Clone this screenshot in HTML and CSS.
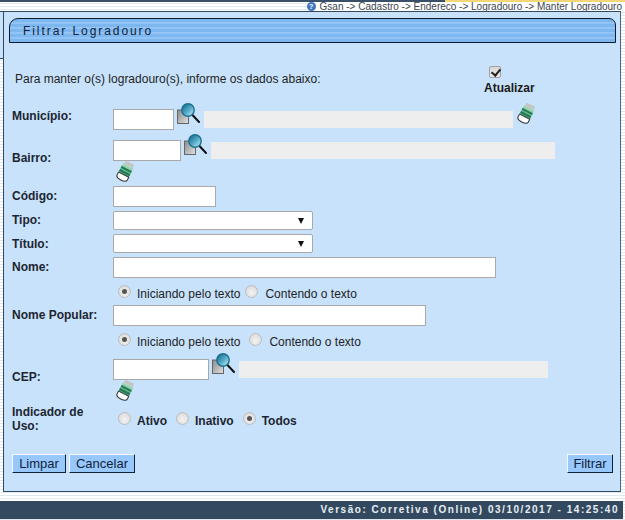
FILE: index.html
```html
<!DOCTYPE html>
<html lang="pt">
<head>
<meta charset="utf-8">
<title>Filtrar Logradouro</title>
<link rel="stylesheet" href="styles.css">
</head>
<body>
<svg class="defs" width="0" height="0" aria-hidden="true">
  <defs>
    <linearGradient id="doc" x1="0" y1="0" x2="1" y2="1"><stop offset="0" stop-color="#8a8a8a"/><stop offset="1" stop-color="#e2e2e2"/></linearGradient>
    <linearGradient id="gl" x1="0" y1="0" x2="1" y2="1"><stop offset="0" stop-color="#0f5f80"/><stop offset=".55" stop-color="#59aecb"/><stop offset="1" stop-color="#d8f2fb"/></linearGradient>
    <linearGradient id="gr" x1="0" y1="0" x2="0" y2="1"><stop offset="0" stop-color="#a7dcc0"/><stop offset="1" stop-color="#3f9a6c"/></linearGradient>
    <symbol id="lupa" viewBox="0 0 23 21">
      <rect x="0.5" y="7" width="11" height="13.5" fill="url(#doc)" stroke="#666" stroke-width="1"/>
      <path d="M15.5 12 L22 19" stroke="#111" stroke-width="2" stroke-linecap="round"/>
      <circle cx="11" cy="7" r="6.2" fill="url(#gl)" stroke="#17708f" stroke-width="1.4"/>
    </symbol>
    <symbol id="borracha" viewBox="0 0 20 21">
      <g transform="rotate(27 10 10.5)">
        <path d="M5.5 4 L6 0.5 H15 L15.5 4 Z" fill="#c4c4c4"/>
        <rect x="4.5" y="4" width="11.5" height="10" fill="url(#gr)"/>
        <rect x="4.5" y="7.2" width="11.5" height="1.8" fill="#1f7a50"/>
        <rect x="4.5" y="10.6" width="11.5" height="1.8" fill="#1f7a50"/>
        <path d="M4.5 14 H16 V17 Q16 20 10 20 Q4.5 20 4.5 17 Z" fill="#fff" stroke="#333" stroke-width="1"/>
      </g>
    </symbol>
  </defs>
</svg>

<div class="page">
  <header class="topbar">
    <span class="crumbs"><span class="help">?</span>Gsan -&gt; Cadastro -&gt; Endereco -&gt; Logradouro -&gt; Manter Logradouro</span>
  </header>

  <div class="middle">
    <div class="stub"></div>
    <main class="panel">
      <h1 class="title">Filtrar Logradouro</h1>

      <div class="intro">
        <p class="intro-text">Para manter o(s) logradouro(s), informe os dados abaixo:</p>
        <label class="update"><input type="checkbox" class="check" checked><span>Atualizar</span></label>
      </div>

      <div class="row row-mun">
        <label class="lbl">Município:</label>
        <div class="fields">
          <input class="txt w61" type="text">
          <svg class="ico-lupa"><use href="#lupa"/></svg>
          <span class="ro w309"></span>
          <svg class="ico-bor"><use href="#borracha"/></svg>
        </div>
      </div>

      <div class="row row-bai">
        <label class="lbl">Bairro:</label>
        <div class="fields">
          <input class="txt w68" type="text">
          <svg class="ico-lupa"><use href="#lupa"/></svg>
          <span class="ro w344"></span>
          <svg class="ico-bor line2"><use href="#borracha"/></svg>
        </div>
      </div>

      <div class="row row-cod">
        <label class="lbl">Código:</label>
        <div class="fields"><input class="txt w103" type="text"></div>
      </div>

      <div class="row row-sel">
        <label class="lbl lbl-tipo">Tipo:</label>
        <div class="fields"><span class="sel"></span></div>
      </div>

      <div class="row row-sel">
        <label class="lbl">Título:</label>
        <div class="fields"><span class="sel"></span></div>
      </div>

      <div class="row row-nome">
        <label class="lbl">Nome:</label>
        <div class="fields"><input class="txt w383" type="text"></div>
      </div>

      <div class="opts opts-a">
        <input type="radio" class="radio" name="a" checked><span class="opt gap-a">Iniciando pelo texto</span>
        <input type="radio" class="radio" name="a"><span class="opt">Contendo o texto</span>
      </div>

      <div class="row row-pop">
        <label class="lbl">Nome Popular:</label>
        <div class="fields"><input class="txt w313" type="text"></div>
      </div>

      <div class="opts opts-b">
        <input type="radio" class="radio" name="b" checked><span class="opt gap-b">Iniciando pelo texto</span>
        <input type="radio" class="radio" name="b"><span class="opt">Contendo o texto</span>
      </div>

      <div class="row row-cep">
        <label class="lbl lbl-cep">CEP:</label>
        <div class="fields">
          <input class="txt w96" type="text">
          <svg class="ico-lupa"><use href="#lupa"/></svg>
          <span class="ro w309"></span>
          <svg class="ico-bor line2"><use href="#borracha"/></svg>
        </div>
      </div>

      <div class="row row-ind">
        <label class="lbl">Indicador de Uso:</label>
        <div class="uso">
          <input type="radio" class="radio" name="c"><b class="opt-b">Ativo</b>
          <input type="radio" class="radio" name="c"><b class="opt-b">Inativo</b>
          <input type="radio" class="radio" name="c" checked><b class="opt-b">Todos</b>
        </div>
      </div>

      <div class="actions">
        <div class="left">
          <button class="btn b-limpar" type="button">Limpar</button>
          <button class="btn b-cancel" type="button">Cancelar</button>
        </div>
        <button class="btn b-filtrar" type="button">Filtrar</button>
      </div>
    </main>
  </div>

  <footer class="footer">Versão: Corretiva (Online) 03/10/2017 - 14:25:40</footer>
</div>
</body>
</html>
```

FILE: styles.css
```css
* { box-sizing: border-box; }
html, body { margin: 0; padding: 0; }
body {
  width: 625px;
  height: 520px;
  overflow: hidden;
  font-family: "Liberation Sans", Arial, sans-serif;
  color: #111;
  background: repeating-linear-gradient(to bottom, #dfe9f1 0, #dfe9f1 1px, #fff 1px, #fff 3px);
}
.defs { position: absolute; }
.page { width: 625px; height: 520px; display: flex; flex-direction: column; }

.topbar {
  height: 11px;
  padding-top: 1px;
  display: flex;
  justify-content: flex-end;
  background: linear-gradient(to right, #3a5068 445px, #f3d675 445px) no-repeat 0 0 / 100% 2px;
}
.crumbs {
  display: flex;
  align-items: center;
  height: 10px;
  padding-right: 3px;
  font-size: 10px;
  color: #3c4650;
  background: linear-gradient(to bottom, transparent 1px, #fff 1px);
  white-space: nowrap;
}
.help {
  width: 9px; height: 9px;
  margin-right: 4px;
  border-radius: 50%;
  background: #3f78c0;
  color: #fff;
  font-size: 7px;
  font-weight: bold;
  text-align: center;
  line-height: 9px;
}

.middle { display: flex; align-items: flex-start; }
.stub {
  width: 3px;
  height: 48px;
  flex: none;
  background: #c8e2fc;
  border-top: 1px solid #33495f;
  border-bottom: 1px solid #33495f;
}
.panel {
  width: 618px;
  height: 481px;
  padding: 6px 4px 0 5px;
  background: #c8e2fc;
  border: 1px solid #33495f;
  border-right-color: #4f6478;
}
.title {
  margin: 0;
  height: 25px;
  padding: 5px 0 0 13px;
  font-size: 12px;
  line-height: 14px;
  font-weight: normal;
  letter-spacing: 1.93px;
  color: #10233a;
  border: 1px solid #0b1a2c;
  border-radius: 9px 7px 0 0;
  background: repeating-linear-gradient(to bottom, #7db7f0 0, #7db7f0 3px, #93c4f5 3px, #93c4f5 5px);
}

.intro { position: relative; height: 66px; }
.intro-text {
  margin: 0;
  padding: 29px 0 0 6px;
  font-size: 12px;
  line-height: 14px;
  color: #222;
}
.update {
  position: absolute;
  left: 475px;
  top: 23px;
  display: flex;
  flex-direction: column;
  align-items: flex-start;
  font-size: 12px;
  font-weight: bold;
  line-height: 14px;
  color: #1a1a1a;
}
.check {
  appearance: none;
  width: 12px; height: 12px;
  margin: 0 0 3px 5px;
  border: 1px solid #a0a0a0;
  border-radius: 2px;
  background: linear-gradient(#d8d8d8, #ececec);
  position: relative;
}
.check::after {
  content: "";
  position: absolute;
  left: 3px; top: 0;
  width: 4px; height: 7px;
  border: solid #222;
  border-width: 0 2px 2px 0;
  transform: rotate(40deg);
}

.row { display: grid; grid-template-columns: 101px 1fr; margin-left: 3px; align-items: center; }
.lbl { font-size: 12px; font-weight: bold; line-height: 14px; color: #1c2530; }
.fields { display: flex; flex-wrap: wrap; align-items: flex-start; }

.txt {
  height: 21px;
  margin: 0;
  padding: 0 2px;
  background: #fff;
  border: 1px solid #a9a9a9;
  border-radius: 0;
}
.w61 { width: 61px; } .w68 { width: 68px; } .w96 { width: 96px; }
.w103 { width: 103px; } .w383 { width: 383px; } .w313 { width: 313px; }

.ico-lupa { width: 23px; height: 21px; margin: -6px 4px 0 3px; flex: none; }
.ro { height: 17px; margin: 2px 0 0 0; background: #eeeeee; flex: none; }
.w309 { width: 309px; } .w344 { width: 344px; }
.ico-bor { width: 20px; height: 21px; margin: -6px 0 0 3px; flex: none; }
.ico-bor.line2 { flex-basis: 20px; margin: 0 400px 0 2px; }

.row-mun { height: 30px; align-items: start; }
.row-bai { margin-top: 1px; }
.row-bai .fields { width: 470px; }
.row-bai .lbl { align-self: start; padding-top: 11px; }
.row-cod { margin-top: 4px; }
.row-cod .lbl { padding-bottom: 1px; }
.row-sel { margin-top: 4px; }
.lbl-tipo { padding-bottom: 2px; }
.row-nome { margin-top: 4px; }
.row-nome .lbl { align-self: start; padding-top: 3px; }

.sel {
  display: block;
  position: relative;
  width: 200px;
  height: 19px;
  background: #fff;
  border: 1px solid #a9a9a9;
  border-radius: 2px;
}
.sel::after {
  content: "";
  position: absolute;
  right: 8px; top: 6px;
  border-left: 3px solid transparent;
  border-right: 3px solid transparent;
  border-top: 6px solid #111;
}

.opts { display: flex; align-items: center; height: 18px; padding-left: 109px; font-size: 12px; color: #222; }
.opts-a { margin-top: 6px; }
.opts-b { margin-top: 6px; }
.radio {
  appearance: none;
  width: 13px; height: 13px;
  margin: -4px 0 0 0;
  flex: none;
  border: 1px solid #bdbdbd;
  border-radius: 50%;
  background: radial-gradient(circle at 50% 60%, #f4f4f4 0, #d4d4d4 100%);
  position: relative;
}
.radio:checked::after {
  content: "";
  position: absolute;
  left: 3px; top: 3px;
  width: 5px; height: 5px;
  border-radius: 50%;
  background: #555;
}
.opt { margin-left: 6px; margin-top: 2px; white-space: nowrap; }
.gap-a { margin-right: 5px; }
.gap-b { margin-right: 9px; }
.opts-a .opt:last-child { margin-left: 7px; }
.opts-b .opt:last-child { margin-left: 7px; }

.row-pop { margin-top: 3px; }
.row-pop .lbl { padding-bottom: 2px; }
.row-cep { margin-top: 9px; }
.row-cep .fields { width: 470px; }
.row-cep .lbl { align-self: start; padding-top: 11px; }
.row-ind { margin-top: 4px; }
.row-ind .lbl { width: 90px; }
.uso { display: flex; align-items: center; font-size: 12px; padding: 2px 0 0 5px; }
.opt-b { margin: 2px 9px 0 6px; color: #1c2530; }

.actions { display: flex; justify-content: space-between; margin: 21px 3px 0 3px; }
.left { display: flex; gap: 3px; }
.btn {
  height: 19px;
  padding: 0;
  font: 13px/15px "Liberation Sans", Arial, sans-serif;
  color: #10233a;
  background: #97c7fb;
  border: 1px solid;
  border-color: #f4faff #0f2236 #0f2236 #f4faff;
}
.b-limpar { width: 54px; }
.b-cancel { width: 66px; }
.b-filtrar { width: 46px; }

.footer {
  margin-top: 9px;
  width: 623px;
  height: 18px;
  padding-right: 4px;
  background: #32495f;
  color: #e8eef4;
  font-size: 10px;
  font-weight: bold;
  line-height: 18px;
  letter-spacing: 1.53px;
  text-align: right;
  white-space: nowrap;
}
```
